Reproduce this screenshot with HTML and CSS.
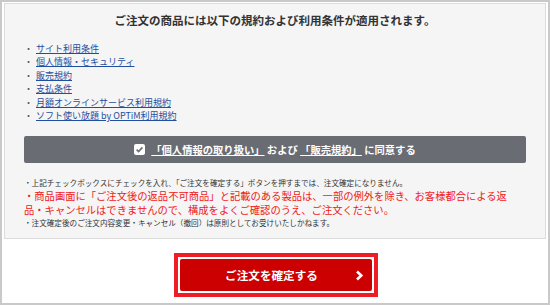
FILE: index.html
```html
<!DOCTYPE html>
<html lang="ja">
<head>
<meta charset="utf-8">
<title>ご注文の確認</title>
<link rel="stylesheet" href="styles.css">
</head>
<body>
<div class="frame">
  <div class="terms">
    <h2 class="terms-title">ご注文の商品には以下の規約および利用条件が適用されます。</h2>
    <ul class="terms-list">
      <li><a href="#">サイト利用条件</a></li>
      <li><a href="#">個人情報・セキュリティ</a></li>
      <li><a href="#">販売規約</a></li>
      <li><a href="#">支払条件</a></li>
      <li><a href="#">月額オンラインサービス利用規約</a></li>
      <li><a href="#">ソフト使い放題 by OPTiM利用規約</a></li>
    </ul>
    <label class="agree">
      <svg class="check" width="11" height="11" viewBox="0 0 11 11"><rect x="0" y="0" width="11" height="11" rx="2" fill="#fff"/><path d="M2.6 5.6 L4.6 7.6 L8.4 3.4" fill="none" stroke="#6a6d74" stroke-width="1.6"/></svg>
      <span class="agree-text"><u>「個人情報の取り扱い」</u> および <u>「販売規約」</u> に同意する</span>
    </label>
    <p class="note">・上記チェックボックスにチェックを入れ、「ご注文を確定する」ボタンを押すまでは、注文確定になりません。</p>
    <p class="warn">・商品画面に「ご注文後の返品不可商品」と記載のある製品は、一部の例外を除き、お客様都合による返<br>品・キャンセルはできませんので、構成をよくご確認のうえ、ご注文ください。</p>
    <p class="note note-last">・注文確定後のご注文内容変更・キャンセル（撤回）は原則としてお受けいたしかねます。</p>
  </div>
  <div class="actions">
    <div class="confirm-wrap">
      <button class="confirm" type="button">
        <span></span>
        <span class="confirm-label">ご注文を確定する</span>
        <svg class="chev" width="9" height="11" viewBox="0 0 9 11"><path d="M2 1.5 L6.3 5.5 L2 9.5" fill="none" stroke="#fff" stroke-width="2.6"/></svg>
      </button>
    </div>
  </div>
</div>
</body>
</html>
```
FILE: styles.css
```css
* { box-sizing: border-box; }
html, body { margin: 0; padding: 0; background: #fff; }
body { font-family: "Noto Sans CJK JP", "Noto Sans", sans-serif; color: #333; }

.frame {
  width: 550px;
  height: 305px;
  border: 2px solid #c9c9c9;
  padding: 1px 2px 0 2px;
  background: #fff;
}

.terms {
  background: #f5f5f5;
  border: 1px solid #dcdcdc;
  height: 236px;
  padding: 8px 19px 7px 19px;
}

.terms-title {
  margin: 0;
  text-align: center;
  font-size: 11.5px;
  line-height: 16px;
  font-weight: bold;
  color: #333;
}

.terms-list {
  list-style: none;
  margin: 14px 0 0 0;
  padding: 0;
  font-size: 9px;
  line-height: 13.4px;
}
.terms-list li { display: flex; }
.terms-list li::before {
  content: "・";
  width: 12px;
  color: #555;
}
.terms-list a { color: #1f4f9e; text-decoration: underline; }

.agree {
  margin-top: 14px;
  height: 27px;
  background: #696c73;
  border-radius: 2px;
  display: flex;
  align-items: center;
  justify-content: center;
  gap: 6px;
  color: #fff;
  font-size: 10.3px;
  font-weight: bold;
}
.check { display: block; }
.agree-text { line-height: 14px; }

.note {
  margin: 13px 0 0 0;
  font-size: 7.6px;
  line-height: 13px;
  color: #333;
}
.warn {
  margin: 0;
  font-size: 10.3px;
  line-height: 14px;
  color: #f01a1a;
}
.note-last { margin: 0; line-height: 12px; }

.actions {
  display: flex;
  justify-content: center;
  margin-top: 14px;
  padding-left: 1px;
}
.confirm-wrap {
  border: 4px solid #ee1c25;
  padding: 2px;
  background: #fff;
}
.confirm {
  width: 192px;
  height: 32px;
  border: 0;
  border-radius: 2px;
  background: #cc0000;
  color: #fff;
  font-family: inherit;
  font-size: 11.6px;
  font-weight: bold;
  display: grid;
  grid-template-columns: 1fr auto 1fr;
  align-items: center;
  padding: 0 8px 0 0;
  margin: 0;
}
.confirm-label { line-height: 16px; }
.chev { justify-self: end; display: block; }
```
